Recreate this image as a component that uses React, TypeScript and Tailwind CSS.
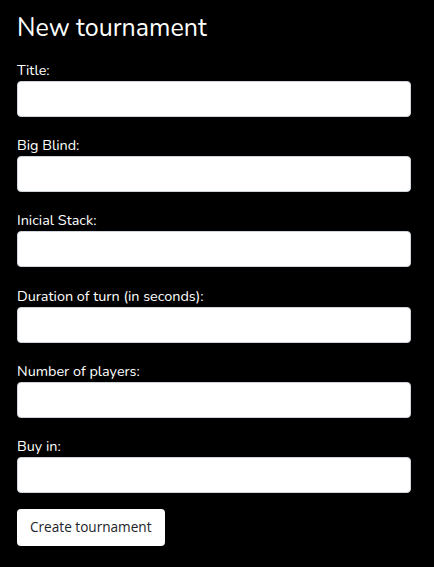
export default function App() {
  const fields = [
    "Title:",
    "Big Blind:",
    "Inicial Stack:",
    "Duration of turn (in seconds):",
    "Number of players:",
    "Buy in:",
  ];

  return (
    <div className="min-h-[567px] w-full bg-black px-[17px] pt-[10px] font-['Nunito','Lato','Noto_Sans',sans-serif] text-white">
      <h1 className="mb-[14px] text-[25px] leading-[36px] font-normal">New tournament</h1>
      <form className="w-[394px]" onSubmit={(e) => e.preventDefault()}>
        {fields.map((f) => (
          <div key={f} className="mb-[18.2px]">
            <label className="block text-[14.4px] leading-[20px] mb-[1px]">{f}</label>
            <input
              type="text"
              className="block h-[36px] w-full rounded-[4px] border border-[#ced4da] bg-white px-3 text-black outline-none"
            />
          </div>
        ))}
        <button
          type="submit"
          className="-mt-[2px] h-[37px] rounded-[4px] bg-white px-[13px] text-[13.6px] text-[#212529] font-['Open_Sans','Noto_Sans',sans-serif]"
        >
          Create tournament
        </button>
      </form>
    </div>
  );
}
